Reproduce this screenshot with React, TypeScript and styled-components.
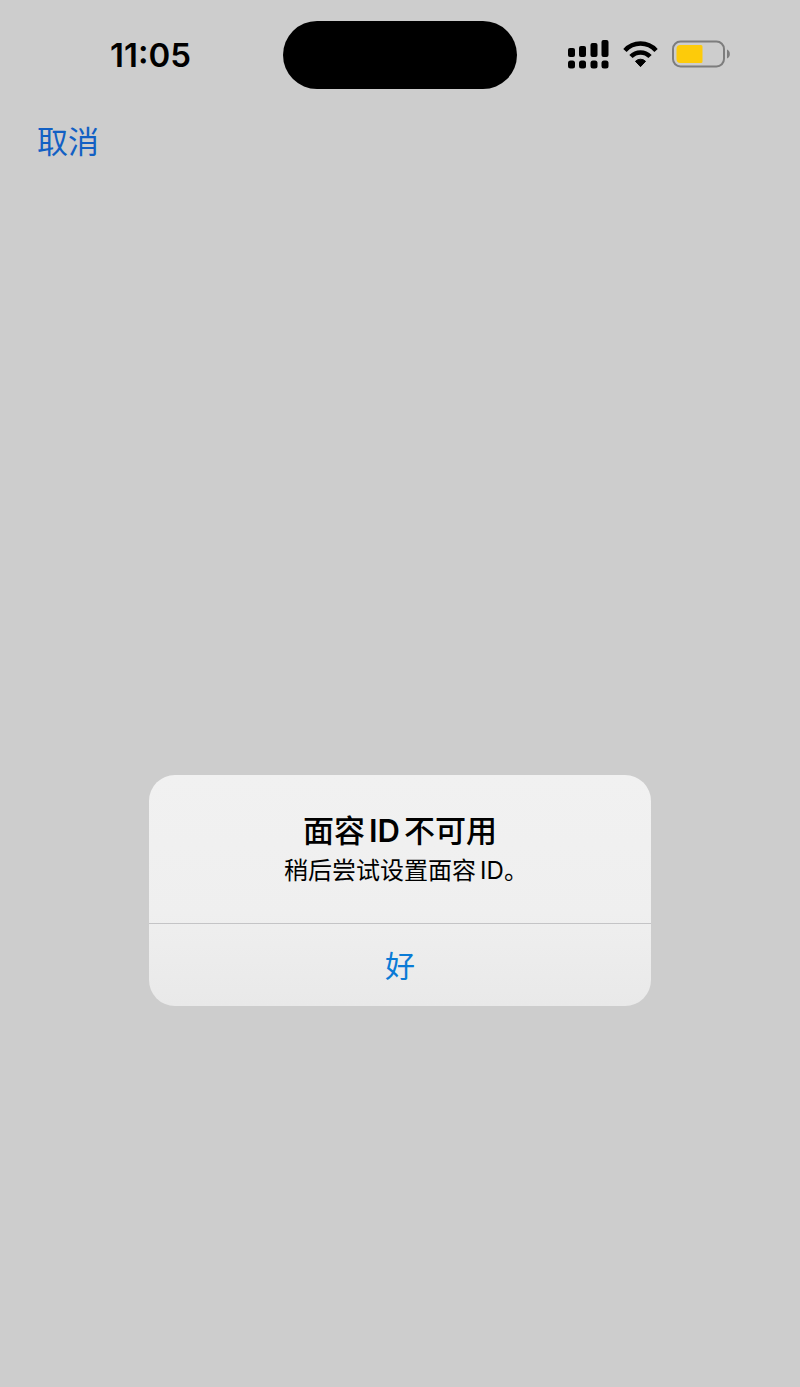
import React, { useState } from "react";
import styled, { createGlobalStyle } from "styled-components";

const GlobalStyle = createGlobalStyle`
  * {
    box-sizing: border-box;
  }
  body {
    margin: 0;
    background: #cdcdcd;
    color: #000;
    font-family: Inter, "Noto Sans CJK SC", sans-serif;
  }
  button {
    border: 0;
    padding: 0;
    background: none;
    font-family: inherit;
    cursor: pointer;
  }
`;

const Screen = styled.div`
  display: flex;
  flex-direction: column;
  min-height: 100vh;
`;

const StatusBar = styled.header`
  display: grid;
  grid-template-columns: 1fr auto 1fr;
  align-items: center;
  padding-top: 21px;
`;

const Time = styled.time`
  padding-left: 18px;
  text-align: center;
  font-size: 33px;
  font-weight: 600;
  line-height: 40px;
`;

const Island = styled.div`
  width: 234px;
  height: 68px;
  border-radius: 34px;
  background: #000;
`;

const StatusIcons = styled.div`
  display: flex;
  justify-content: center;
  align-items: center;
  gap: 14px;
  padding: 0 18px 2px 0;

  svg {
    display: block;
  }
`;

const NavBar = styled.nav`
  display: flex;
  padding: 31px 37px 0;
`;

const CancelButton = styled.button`
  color: #1260c4;
  font-size: 31px;
  line-height: 44px;
`;

const Main = styled.main`
  flex: 1;
  display: flex;
  flex-direction: column;
  align-items: center;
  justify-content: center;
  padding: 229px 24px 0;
`;

const Alert = styled.div`
  width: 100%;
  max-width: 502px;
  overflow: hidden;
  border-radius: 26px;
  background: linear-gradient(#f1f1f1, #efefef 60%, #e9e9e9);
`;

const AlertBody = styled.div`
  padding: 35px 24px 33px;
  text-align: center;
`;

const AlertTitle = styled.h1`
  margin: 0;
  font-size: 31px;
  font-weight: 500;
  line-height: 42px;
`;

const AlertMessage = styled.p`
  margin: 0;
  font-size: 24px;
  line-height: 38px;
  font-feature-settings: "halt";
`;

const Latin = styled.span<{ $strong?: boolean }>`
  margin: ${(props) => (props.$strong ? "0 4px" : "0 0 0 4px")};
  font-weight: ${(props) => (props.$strong ? 600 : 400)};
`;

const AlertButton = styled.button`
  display: block;
  width: 100%;
  padding-top: 2px;
  border-top: 1px solid #c4c4c6;
  color: #0a7bd6;
  font-size: 30px;
  line-height: 80px;
`;

function SignalIcon() {
  return (
    <svg width="41" height="29" viewBox="0 0 41 29" aria-hidden="true">
      <rect x="0" y="8" width="7" height="9" rx="2" />
      <rect x="11" y="6" width="7" height="11" rx="2" />
      <rect x="22.500" y="3" width="7" height="14" rx="2" />
      <rect x="33.500" y="0" width="7" height="17" rx="2" />
      <rect x="0" y="20.500" width="7" height="8" rx="2.500" />
      <rect x="11" y="20.500" width="7" height="8" rx="2.500" />
      <rect x="22.500" y="20.500" width="7" height="8" rx="2.500" />
      <rect x="33.500" y="20.500" width="7" height="8" rx="2.500" />
    </svg>
  );
}

function WifiIcon() {
  return (
    <svg width="35" height="27" viewBox="0 0 36 27" aria-hidden="true">
      <g fill="none" stroke="#000" strokeWidth="4.600">
        <path d="M2 9.400a21.500 21.500 0 0 1 32 0" />
        <path d="M8.200 15.600a13.400 13.400 0 0 1 19.600 0" />
      </g>
      <path d="M18 26l-5.200-5.500a7.400 7.400 0 0 1 10.400 0z" stroke="#000" strokeLinejoin="round" />
    </svg>
  );
}

function BatteryIcon() {
  return (
    <svg width="59" height="28" viewBox="0 0 59 28" aria-hidden="true">
      <rect x="1" y="1.500" width="51" height="25" rx="7.500" fill="none" stroke="#7d7d7d" strokeWidth="2" />
      <path d="M8.500 5H29a1.500 1.500 0 0 1 1.500 1.500v15A1.500 1.500 0 0 1 29 23H8.500a4 4 0 0 1-4-4V9a4 4 0 0 1 4-4z" fill="#fdcb0a" />
      <path d="M55 9.500c3.800 1.400 3.800 7.600 0 9z" fill="#7d7d7d" />
    </svg>
  );
}

export default function App() {
  const [isOpen, setIsOpen] = useState(true);
  const onClose = () => {
    setIsOpen(false);
  };

  return (
    <Screen>
      <GlobalStyle />
      <StatusBar>
        <Time>11:05</Time>
        <Island />
        <StatusIcons>
          <SignalIcon />
          <WifiIcon />
          <BatteryIcon />
        </StatusIcons>
      </StatusBar>
      <NavBar>
        <CancelButton type="button">取消</CancelButton>
      </NavBar>
      <Main>
        {isOpen && (
          <Alert role="alertdialog" aria-labelledby="alert-title" aria-describedby="alert-message">
            <AlertBody>
              <AlertTitle id="alert-title">
                面容<Latin $strong>ID</Latin>不可用
              </AlertTitle>
              <AlertMessage id="alert-message">
                稍后尝试设置面容<Latin>ID</Latin>。
              </AlertMessage>
            </AlertBody>
            <AlertButton type="button" onClick={onClose}>
              好
            </AlertButton>
          </Alert>
        )}
      </Main>
    </Screen>
  );
}
